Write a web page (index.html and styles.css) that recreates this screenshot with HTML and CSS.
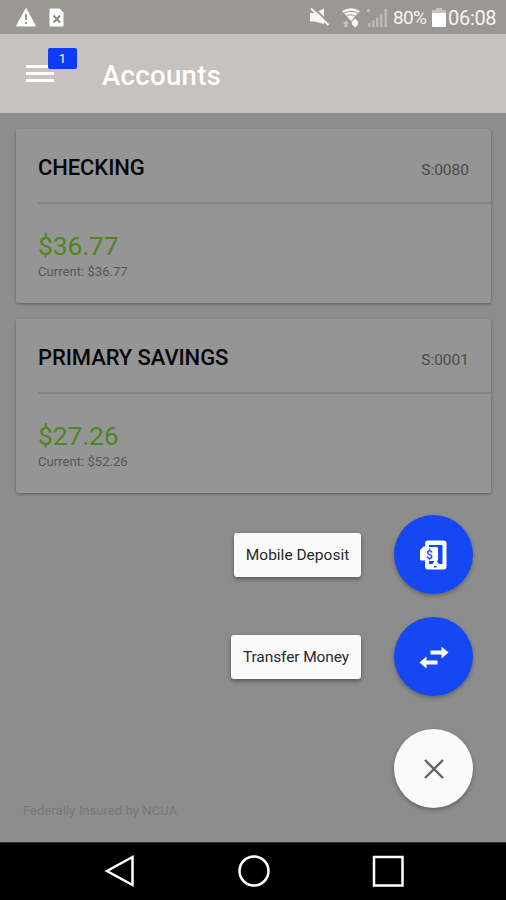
FILE: index.html
```html
<!DOCTYPE html>
<html lang="en">
<head>
<meta charset="utf-8">
<title>Accounts</title>
<link rel="stylesheet" href="styles.css">
</head>
<body>
<div class="phone">
  <div class="status">
    <svg class="alerts" width="52" height="24" viewBox="0 0 52 24">
      <path fill="#fff" stroke="#fff" stroke-width="1" stroke-linejoin="round" d="M11 3.5 20.5 21h-19z"/>
      <path fill="#9b9793" d="M10 9h2v6h-2zM10 17h2v2h-2z"/>
      <path fill="#fff" d="M36 3.500h8.500l4 4V20.500a1 1 0 0 1-1 1H35.500a1 1 0 0 1-1-1v-16a1 1 0 0 1 1-1z"/>
      <path stroke="#8f8b87" stroke-width="2" d="m38.500 10.500 6.500 7m0-7-6.500 7"/>
    </svg>
    <div class="system">
      <svg width="80" height="26" viewBox="0 0 80 26">
        <path fill="#f8f7f6" d="M1 8h4.500L15 3.500v15.500L5.500 16.500H1z"/>
        <path stroke="#9b9793" stroke-width="1.800" d="M3.500 2 20.500 18"/>
        <path stroke="#f8f7f6" stroke-width="2" d="M2 3.500l17.500 16.500"/>
        <path fill="#f8f7f6" d="M33 6Q42 .5 51 6L42 16z"/>
        <g fill="none" stroke="#9b9793" stroke-width="1">
          <path d="M34.500 8.500Q42 4 49.500 8.500M37 11.500q5-3.500 10 0"/>
        </g>
        <path fill="#f8f7f6" d="m46 13.500 3.500 3.500-1 1 1 1L46 22.500 42.500 19l1-1-1-1z"/>
        <path fill="#c8c5c2" d="m37 15.500 3 3.500h-1.500v3h-3v-3H34z"/>
        <g fill="#bcb8b4"><path d="M59 18h2.500v4H59zM63 15.500h2.500V22H63zM67 12.500h2.500V22H67zM71 9h2.500v13H71zM75.500 4H78v18h-2.500zM58 4h3v3h-3z"/></g>
      </svg>
      <span class="percent">80%</span>
      <svg class="battery" width="14" height="20" viewBox="0 0 14 20">
        <path fill="#c4c1be" d="M4 0h6v2h3a1 1 0 0 1 1 1v3H0V3a1 1 0 0 1 1-1h3z"/>
        <path fill="#fff" d="M0 5h14v13a1 1 0 0 1-1 1H1a1 1 0 0 1-1-1z"/>
      </svg>
      <span class="clock">06:08</span>
    </div>
  </div>
  <header class="appbar">
    <div class="menu"><i></i><i></i><i></i><span class="badge">1</span></div>
    <h1>Accounts</h1>
  </header>
  <main class="content">
    <section class="card">
      <div class="card-head"><h2>CHECKING</h2><span class="suffix">S:0080</span></div>
      <div class="card-body"><div class="amount">$36.77</div><div class="current">Current: $36.77</div></div>
    </section>
    <section class="card">
      <div class="card-head"><h2>PRIMARY SAVINGS</h2><span class="suffix">S:0001</span></div>
      <div class="card-body"><div class="amount">$27.26</div><div class="current">Current: $52.26</div></div>
    </section>
    <p class="insured">Federally Insured by NCUA</p>
    <div class="actions">
      <div class="action deposit"><span class="label">Mobile Deposit</span>
        <div class="fab"><svg width="32" height="32" viewBox="0 0 32 32">
          <path fill="#fff" fill-rule="evenodd" d="M10 1.500h15.500a3 3 0 0 1 3 3v23a3 3 0 0 1-3 3H10a3 3 0 0 1-3-3v-6H3.500A1.500 1.500 0 0 1 2 20v-9l3.500-3.500H7v-3a3 3 0 0 1 3-3zm1 4.500v2h7.500q1.500 0 1.500 1.500V20.500q0 1.500-1.500 1.500H11v3h13.500V6z"/>
          <path fill="#1548f4" d="M16 27h2.500v1.500H16z"/>
          <path fill="#fff" d="m14.500 25 2-3h2l2.500 3z"/>
          <text class="dollar" x="8" y="19.500">$</text>
        </svg></div>
      </div>
      <div class="action transfer"><span class="label">Transfer Money</span>
        <div class="fab"><svg width="32" height="32" viewBox="0 0 32 32">
          <path fill="#fff" d="M12.500 9.500H23.500v-4l7 6-7 6v-4H12.500zM19.500 19.500h-11v-4L1.500 21.500l7 6v-4h11z"/>
        </svg></div>
      </div>
      <div class="fab close"><svg width="32" height="32" viewBox="0 0 32 32"><path stroke="#636363" stroke-width="2.400" d="m7 7 18 18M25 7 7 25"/></svg></div>
    </div>
  </main>
  <nav class="softkeys">
    <svg width="34" height="34" viewBox="0 0 34 34"><path d="M29.500 3v28L4 17z"/></svg>
    <svg width="34" height="34" viewBox="0 0 34 34"><circle cx="17" cy="17" r="14.500"/></svg>
    <svg width="34" height="34" viewBox="0 0 34 34"><path d="M3 3h28.500v28.500H3z"/></svg>
  </nav>
</div>
</body>
</html>
```

FILE: styles.css
```css
* { box-sizing: border-box; }
body { margin: 0; font-family: Roboto, "Liberation Sans", sans-serif; }
h1, h2, p { margin: 0; font-weight: 500; }
svg { display: block; flex: none; }
.phone { width: 506px; height: 900px; display: flex; flex-direction: column; overflow: hidden; white-space: nowrap; }
.status { height: 34px; flex: none; background: #9b9793; display: flex; justify-content: space-between; align-items: flex-start; padding: 5px 9px 0 15px; }
.system { display: flex; color: #f5f4f3; }
.percent { font-size: 19px; line-height: 26px; margin-left: 4px; width: 34px; letter-spacing: -.7px; }
.battery { margin: 3px 2px 0 5px; }
.clock { font-size: 20px; line-height: 27px; width: 49px; letter-spacing: -.3px; }
.appbar { height: 79px; flex: none; background: #c7c2bd; display: flex; align-items: center; padding-left: 26px; color: #fff; }
.menu { width: 28px; display: flex; flex-direction: column; gap: 4px; position: relative; }
.menu i { height: 3px; background: #fff; }
.badge { position: absolute; left: 22px; top: -17px; width: 29px; height: 21px; border-radius: 2px; background: #0c3cf5; font-size: 13px; line-height: 22px; text-align: center; }
h1 { font-size: 27.500px; margin: 4px 0 0 48px; letter-spacing: .35px; }
.content { flex: 1; background: #8d8d8d; position: relative; padding: 16px 15px 0 16px; display: flex; flex-direction: column; gap: 16px; }
.card { height: 174px; flex: none; border-radius: 2px; background: #959595; box-shadow: 0 1px 3px rgba(0,0,0,.35); padding-left: 22px; }
.card-head { height: 75px; border-bottom: 2px solid #868686; display: flex; justify-content: space-between; align-items: center; padding: 4px 22px 0 0; }
h2 { font-size: 22px; color: #080808; letter-spacing: -.1px; }
.suffix { font-size: 15.500px; color: #4b4b4b; margin-top: 5px; }
.card-body { padding-top: 25px; }
.amount { font-size: 26.500px; line-height: 33px; color: #4f8522; letter-spacing: -.15px; }
.current { font-size: 13px; line-height: 18px; color: #555; letter-spacing: .05px; margin-top: 1px; }
.insured { margin: auto 0 22px 7px; font-size: 13px; line-height: 18px; font-weight: 400; color: #777; letter-spacing: .06px; }
.actions { position: absolute; right: 33px; bottom: 34px; display: flex; flex-direction: column; align-items: flex-end; }
.action { display: flex; align-items: center; gap: 33px; }
.deposit { margin-bottom: 23px; }
.transfer { margin-bottom: 33px; }
.label { height: 44px; width: 127px; border-radius: 3px; background: #fafafa; box-shadow: 0 2px 4px rgba(0,0,0,.4); color: #292929; font-size: 15.500px; line-height: 45px; text-align: center; }
.transfer .label { width: 130px; letter-spacing: -.1px; }
.fab { width: 79px; height: 79px; border-radius: 50%; background: #1548f4; display: flex; align-items: center; justify-content: center; box-shadow: 0 2px 4px rgba(0,0,0,.3); }
.close { background: #fafafa; }
.dollar { font: 500 12px Roboto, sans-serif; fill: #1548f4; }
.softkeys { height: 58px; flex: none; background: #000; display: flex; justify-content: center; align-items: center; gap: 100px; padding: 0 0 2px 1px; border-top: 1px solid #333; }
.softkeys svg { fill: none; stroke: #fff; stroke-width: 2.500px; }
```
